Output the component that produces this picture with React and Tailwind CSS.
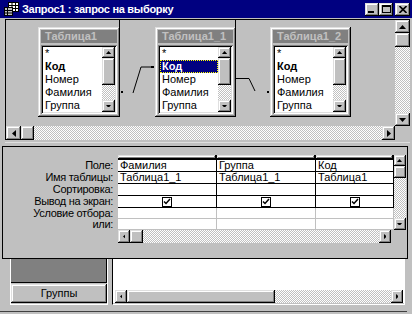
import React from 'react';

// Win95-style bevels
const raised =
  'bg-[#c0c0c0] shadow-[inset_-1px_-1px_0_#000,inset_1px_1px_0_#dfdfdf,inset_-2px_-2px_0_#808080,inset_2px_2px_0_#fff]';
const sunken =
  'shadow-[inset_1px_1px_0_#808080,inset_-1px_-1px_0_#fff,inset_2px_2px_0_#000,inset_-2px_-2px_0_#dfdfdf]';
const checker =
  'bg-[#c0c0c0] bg-[image:repeating-conic-gradient(#fff_0_25%,#c0c0c0_0_50%)] bg-size-[2px_2px]';

const arrows = {
  up: { w: 7, h: 4, pts: '0,4 3.5,0 7,4' },
  down: { w: 7, h: 4, pts: '0,0 3.5,4 7,0' },
  left: { w: 4, h: 7, pts: '4,0 0,3.5 4,7' },
  right: { w: 4, h: 7, pts: '0,0 4,3.5 0,7' },
};

const ArrowBtn = ({ dir, className = '', small = false }) => {
  const a = arrows[dir];
  const s = small ? 0.72 : 1;
  return (
    <div className={`${raised} flex shrink-0 items-center justify-center ${className}`}>
      <svg width={a.w * s} height={a.h * s} viewBox={`0 0 ${a.w} ${a.h}`}>
        <polygon points={a.pts} fill="#000" />
      </svg>
    </div>
  );
};

const fields = ['*', 'Код', 'Номер', 'Фамилия', 'Группа'];

const FieldList = ({ title, selected, className }) => (
  <div className={`absolute top-[7px] flex h-[90px] flex-col p-[3px] ${raised} ${className}`}>
    <div className="h-[13px] shrink-0 overflow-hidden whitespace-nowrap bg-[#808080] pl-[4px] text-[11px] font-bold leading-[13px] text-[#c0c0c0]">
      {title}
    </div>
    <div className={`mt-[2px] flex min-h-0 flex-1 bg-white p-[2px] ${sunken}`}>
      <div className="min-w-0 flex-1 overflow-hidden">
        {fields.map((f) => (
          <div
            key={f}
            className={`h-[13px] whitespace-nowrap pl-[2px] text-[11px] leading-[13px] ${
              f === 'Код' ? 'font-bold' : ''
            } ${
              selected === f
                ? 'bg-[#000080] text-white outline-1 -outline-offset-1 outline-dotted outline-[#ffff00]'
                : ''
            }`}
          >
            {f}
          </div>
        ))}
      </div>
      <div className="flex w-[13px] shrink-0 flex-col">
        <ArrowBtn dir="up" small className="h-[11px]" />
        <div className={`${raised} h-[27px] shrink-0`} />
        <div className={`${checker} flex-1`} />
        <ArrowBtn dir="down" small className="h-[12px]" />
      </div>
    </div>
  </div>
);

const TitleBar = () => (
  <div className="flex h-[18px] items-center bg-[#000080] pl-[4px] pr-[2px]">
    {/* query window icon */}
    <svg width="15" height="14" viewBox="0 0 15 14">
      <rect x="4.5" y="0.5" width="10" height="9" fill="#fff" stroke="#000" />
      <path d="M4.5 3.5h10M4.5 6.5h10M8 0.5v9M11.5 0.5v9" stroke="#000" />
      <rect x="0.5" y="5.5" width="8" height="8" fill="#c0c0c0" stroke="#000" />
      <path d="M0.5 8.5h8M0.5 11h8M3.5 5.5v8" stroke="#000" />
    </svg>
    <span className="ml-[3px] whitespace-nowrap text-[11px] font-bold leading-none tracking-[-0.3px] text-white">
      Запрос1 : запрос на выборку
    </span>
    <div className="ml-auto flex items-center">
      <div className={`${raised} flex h-[13px] w-[14px] items-end pb-[3px] pl-[3px]`}>
        <svg width="6" height="2">
          <rect width="6" height="2" fill="#000" />
        </svg>
      </div>
      <div className={`${raised} flex h-[13px] w-[14px] items-center justify-center`}>
        <svg width="9" height="8" viewBox="0 0 9 8">
          <rect x="0.5" y="0.5" width="8" height="7" fill="none" stroke="#000" />
          <rect width="9" height="2" fill="#000" />
        </svg>
      </div>
      <div className={`${raised} ml-[2px] flex h-[13px] w-[15px] items-center justify-center`}>
        <svg width="8" height="7" viewBox="0 0 8 7">
          <path d="M0.5 0L7.5 7M7.5 0L0.5 7" stroke="#000" strokeWidth="1.6" />
        </svg>
      </div>
    </div>
  </div>
);

const UpperPane = () => (
  <div className="ml-[5px] mt-[1px] flex h-[121px] w-[405px] flex-col border-l border-t border-black">
    <div className="flex h-[106px]">
      {/* table canvas */}
      <div className="relative flex-1 overflow-hidden">
        <div className="absolute left-[113px] top-0 h-[8px] w-[1px] bg-black" />
        <div className="absolute left-[229px] top-0 h-[8px] w-[1px] bg-black" />
        <FieldList title="Таблица1" className="left-[32px] w-[82px]" />
        <FieldList title="Таблица1_1" selected="Код" className="left-[149px] w-[81px]" />
        <FieldList title="Таблица1_2" className="left-[264px] w-[81px]" />
        <svg className="pointer-events-none absolute inset-0" width="389" height="106">
          <rect x="115" y="71" width="2" height="2" fill="#000" />
          <polyline points="127,73 135,47 146,47" fill="none" stroke="#000" />
          <rect x="145" y="46" width="3" height="2" fill="#000" />
          <polyline points="230,58.5 243,58.5 249,71" fill="none" stroke="#000" />
          <rect x="261" y="71" width="2" height="2" fill="#000" />
        </svg>
      </div>
      <div className="flex w-[15px] flex-col">
        <ArrowBtn dir="up" className="h-[13px]" />
        <div className={`${raised} h-[14px] shrink-0`} />
        <div className={`${checker} flex-1`} />
        <ArrowBtn dir="down" className="h-[13px]" />
      </div>
    </div>
    <div className="flex h-[14px]">
      <ArrowBtn dir="left" className="w-[15px]" />
      <div className={`${raised} w-[13px] shrink-0`} />
      <div className={`${checker} flex-1`} />
      <ArrowBtn dir="right" className="w-[13px]" />
      <div className="w-[15px] shrink-0 bg-[#c0c0c0]" />
    </div>
  </div>
);

const cols = [
  { field: 'Фамилия', table: 'Таблица1_1' },
  { field: 'Группа', table: 'Таблица1_1' },
  { field: 'Код', table: 'Таблица1' },
];
const labels = ['Поле:', 'Имя таблицы:', 'Сортировка:', 'Вывод на экран:', 'Условие отбора:', 'или:'];
const rowH = ['h-[12px]', 'h-[12px]', 'h-[12px]', 'h-[12px]', 'h-[11px]', 'h-[11px]'];

const Check = () => (
  <div className="flex h-[10px] w-[10px] items-center justify-center border border-black bg-white">
    <svg width="8" height="7" viewBox="0 0 8 7">
      <path d="M1 3.5L3 5.5L7 1" fill="none" stroke="#000" strokeWidth="1.5" />
    </svg>
  </div>
);

const LowerPane = () => (
  <div className="ml-[2px] flex h-[113px] w-[406px] border border-black pt-[8px]">
    <div className="w-[115px] shrink-0 pr-[5px] pt-[5px] text-right text-[11px] leading-[11px] tracking-[-0.3px]">
      {labels.map((l, i) => (
        <div key={l} className={`${rowH[i]} whitespace-nowrap`}>
          {l}
        </div>
      ))}
    </div>
    <div className="flex h-[88px] w-[288px] flex-col">
      <div className="flex h-[75px]">
        <div className="grid flex-1 grid-cols-[99px_99px_78px] content-start bg-white">
          {cols.map((c, i) => (
            <div key={'s' + i} className={`h-[5px] border-b border-r border-black ${raised}`} />
          ))}
          {labels.map((l, r) =>
            cols.map((c, i) => (
              <div
                key={r + '-' + i}
                className={`${rowH[r]} flex items-center overflow-hidden whitespace-nowrap border-b border-r px-[2px] text-[11px] leading-[11px] ${
                  r < 4 ? 'border-black' : 'border-[#c0c0c0]'
                } ${r === 3 ? 'justify-center' : ''}`}
              >
                {r === 0 && c.field}
                {r === 1 && c.table}
                {r === 3 && <Check />}
              </div>
            ))
          )}
        </div>
        <div className="flex w-[12px] flex-col">
          <ArrowBtn dir="up" small className="h-[11px]" />
          <div className={`${raised} h-[12px] shrink-0`} />
          <div className={`${checker} flex-1`} />
          <ArrowBtn dir="down" small className="h-[12px]" />
        </div>
      </div>
      <div className="flex h-[13px]">
        <ArrowBtn dir="left" small className="w-[12px]" />
        <div className={`${raised} w-[13px] shrink-0`} />
        <div className={`${checker} flex-1`} />
        <ArrowBtn dir="right" small className="w-[12px]" />
        <div className="w-[15px] shrink-0 bg-[#c0c0c0]" />
      </div>
    </div>
  </div>
);

const BottomForm = () => (
  <>
    <div className="flex h-[46px] pl-[10px]">
      <div className="flex w-[98px] flex-col border-x border-b border-white">
        <div className="h-[24px] border-b border-r border-black bg-[#808080]" />
        <div className={`${raised} mt-[1px] flex h-[19px] items-center justify-center text-[11px]`}>
          Группы
        </div>
      </div>
      <div className="ml-[4px] flex w-[293px] flex-col border-b border-l border-r border-l-black border-b-white border-r-white">
        <div className="h-[31px] bg-white" />
        <div className="flex h-[13px] bg-white pl-[2px] pr-[1px]">
          <ArrowBtn dir="left" small className="w-[12px]" />
          <div className={`${raised} w-[148px] shrink-0`} />
          <div className={`${checker} flex-1`} />
          <ArrowBtn dir="right" small className="w-[12px]" />
        </div>
      </div>
    </div>
    <div className="mt-[6px] h-[1px] w-[407px] bg-[#404040]" />
  </>
);

export default function App() {
  return (
    <div className="relative h-[314px] w-[412px] overflow-hidden bg-[#c0c0c0] font-['Liberation_Sans',Arial,sans-serif] text-black">
      <TitleBar />
      <UpperPane />
      {/* splitter */}
      <div className="ml-[5px] mt-[2px] h-[1px] w-[405px] bg-[#dfdfdf]" />
      <div className="h-[3px]" />
      <LowerPane />
      <BottomForm />
    </div>
  );
}
